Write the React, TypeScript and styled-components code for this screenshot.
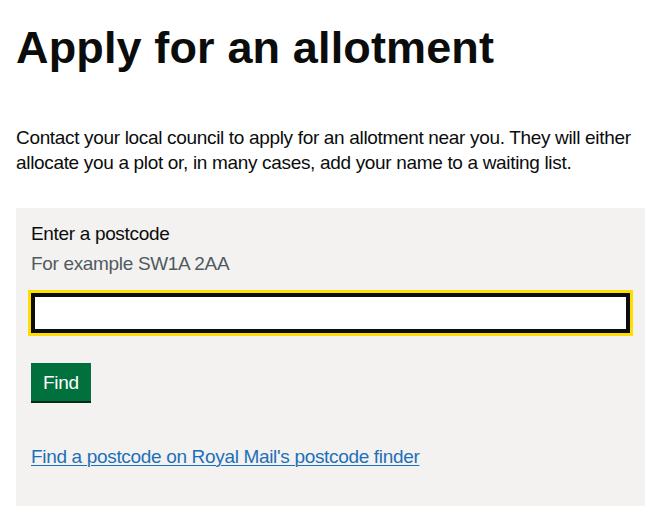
import React from "react";
import styled, { createGlobalStyle } from "styled-components";

const color = {
  text: "#0b0c0c",
  secondary: "#505a5f",
  panel: "#f3f2f1",
  link: "#1d70b8",
  focus: "#ffdd00",
  green: "#00703c",
  greenShadow: "#002d18",
};

const GlobalStyle = createGlobalStyle`
  body {
    margin: 0;
    background: #ffffff;
    color: ${color.text};
    font-family: "Liberation Sans", Arial, sans-serif;
  }
`;

const Main = styled.main`
  width: 629px;
  padding: 23px 0 0 16px;
`;

const Heading = styled.h1`
  margin: 0 0 52px;
  font-size: 45px;
  line-height: 50px;
  font-weight: 700;
  letter-spacing: 0.14px;
`;

const Body = styled.p`
  margin: 0 0 33px;
  font-size: 19px;
  line-height: 25px;
  letter-spacing: -0.33px;
`;

const Panel = styled.form`
  background: ${color.panel};
  padding: 13px 15px 37px;
`;

const FormGroup = styled.div`
  margin-bottom: 30px;
`;

const Label = styled.label`
  display: block;
  margin-bottom: 5px;
  font-size: 19px;
  line-height: 25px;
  letter-spacing: -0.33px;
`;

const Hint = styled.div`
  margin-bottom: 17px;
  color: ${color.secondary};
  font-size: 19px;
  line-height: 25px;
  letter-spacing: -0.33px;
`;

const Input = styled.input`
  display: block;
  box-sizing: border-box;
  width: 100%;
  height: 40px;
  margin: 0;
  padding: 5px;
  border: 2px solid ${color.text};
  border-radius: 0;
  outline: 3px solid ${color.focus};
  outline-offset: 0;
  box-shadow: inset 0 0 0 2px ${color.text};
  font-family: inherit;
  font-size: 19px;
  background: #ffffff;
`;

const Button = styled.button`
  display: block;
  box-sizing: border-box;
  margin: 0 0 43px;
  padding: 8px 10px 7px;
  border: 2px solid transparent;
  border-radius: 0;
  background: ${color.green};
  box-shadow: 0 2px 0 ${color.greenShadow};
  color: #ffffff;
  font-family: inherit;
  font-size: 19px;
  line-height: 19px;
  letter-spacing: -0.33px;
  cursor: pointer;
`;

const LinkText = styled.p`
  margin: 0;
  font-size: 19px;
  line-height: 25px;
  letter-spacing: -0.33px;
`;

const Link = styled.a`
  color: ${color.link};
  text-decoration: underline;
  text-decoration-thickness: 1px;
  text-underline-offset: 2px;
`;

export default function App() {
  return (
    <>
      <GlobalStyle />
      <Main>
        <Heading>Apply for an allotment</Heading>
        <Body>
          Contact your local council to apply for an allotment near you. They
          will either allocate you a plot or, in many cases, add your name to a
          waiting list.
        </Body>
        <Panel onSubmit={(e) => e.preventDefault()}>
          <FormGroup>
            <Label htmlFor="postcode">Enter a postcode</Label>
            <Hint>For example SW1A 2AA</Hint>
            <Input id="postcode" name="postcode" type="text" />
          </FormGroup>
          <Button type="submit">Find</Button>
          <LinkText>
            <Link href="#">Find a postcode on Royal Mail's postcode finder</Link>
          </LinkText>
        </Panel>
      </Main>
    </>
  );
}
